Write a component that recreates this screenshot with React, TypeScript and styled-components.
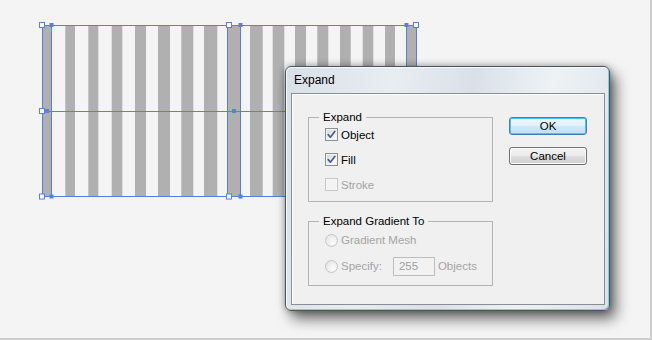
import React from 'react'
import styled, { createGlobalStyle, css } from 'styled-components'

const GlobalStyle = createGlobalStyle`
  html, body {
    margin: 0;
    padding: 0;
  }
  body {
    background: #f4f4f4;
    font-family: "Liberation Sans", Arial, sans-serif;
  }
`

const Page = styled.div`
  position: relative;
  width: 652px;
  height: 340px;
  box-sizing: border-box;
  background: #f4f4f4;
  border-right: 2px solid #cdcdcd;
  border-bottom: 2px solid #cdcdcd;
  overflow: hidden;
`

const Artwork = styled.svg`
  position: absolute;
  left: 38px;
  top: 21px;
`

const Dialog = styled.div`
  position: absolute;
  left: 285px;
  top: 66px;
  width: 325px;
  height: 245px;
  box-sizing: border-box;
  display: flex;
  flex-direction: column;
  border: 1px solid #4b5660;
  border-radius: 6px;
  background: linear-gradient(100deg, #d8e0e7 0%, #e8edf1 30%, #d9e1e8 52%, #eef2f5 74%, #dae2e9 100%);
  box-shadow:
    inset -1px -1px 0 #7ccfe6,
    inset 1px 1px 0 #f6f9fb,
    0 0 7px rgba(0, 0, 0, 0.35),
    6px 8px 14px rgba(0, 0, 0, 0.55);
`

const TitleBar = styled.div`
  height: 26px;
  flex: none;
  display: flex;
  align-items: center;
  padding-left: 8px;
  font-size: 12px;
  color: #000;
`

const Body = styled.div`
  flex: 1;
  margin: 0 4px 5px 5px;
  display: flex;
  align-items: flex-start;
  gap: 16px;
  padding: 23px 0 0 16px;
  border: 1px solid #8a8e92;
  background: #f0f0f0;
  box-shadow: inset 1px 1px 0 #ffffff;
  font-size: 11.5px;
`

const Groups = styled.div`
  display: flex;
  flex-direction: column;
  gap: 19px;
`

const GroupBox = styled.div<{ $pad: string }>`
  position: relative;
  width: 185px;
  box-sizing: border-box;
  border: 1px solid #b4b4b4;
  padding: ${p => p.$pad};
`

const Legend = styled.span`
  position: absolute;
  top: -8px;
  left: 10px;
  padding: 0 4px;
  background: #f0f0f0;
  line-height: 14px;
  color: #000;
`

const Row = styled.div<{ $h: number }>`
  display: flex;
  align-items: center;
  gap: 3px;
  height: ${p => p.$h}px;
`

const Label = styled.span<{ $disabled?: boolean }>`
  color: ${p => (p.$disabled ? '#a4a4a4' : '#000')};
  white-space: nowrap;
`

const Box = styled.span<{ $disabled?: boolean }>`
  width: 13px;
  height: 13px;
  flex: none;
  box-sizing: border-box;
  display: flex;
  align-items: center;
  justify-content: center;
  border: 1px solid ${p => (p.$disabled ? '#c6c6c6' : '#8e8f8f')};
  background: ${p => (p.$disabled
    ? '#f3f3f3'
    : 'linear-gradient(135deg, #d2d4d6 0%, #f6f6f6 70%, #ffffff 100%)')};
  box-shadow: inset 0 0 0 1px ${p => (p.$disabled ? '#f7f7f7' : '#f4f4f4')};
`

const Radio = styled.span`
  width: 13px;
  height: 13px;
  flex: none;
  box-sizing: border-box;
  border-radius: 50%;
  border: 1px solid #c4c4c4;
  background: radial-gradient(circle at 65% 70%, #fbfbfb 0%, #ececec 60%, #e0e0e0 100%);
`

const NumberField = styled.span`
  width: 42px;
  height: 19px;
  box-sizing: border-box;
  margin-left: 8px;
  padding-left: 5px;
  display: flex;
  align-items: center;
  border: 1px solid #bdbdbd;
  background: #f2f2f2;
  color: #a0a0a0;
`

const Buttons = styled.div`
  display: flex;
  flex-direction: column;
  gap: 12px;
`

const Button = styled.div<{ $default?: boolean }>`
  width: 78px;
  height: 18px;
  box-sizing: border-box;
  display: flex;
  align-items: center;
  justify-content: center;
  border-radius: 3px;
  border: 1px solid #707070;
  background: linear-gradient(to bottom, #f2f2f2 0%, #ebebeb 50%, #dddddd 51%, #cfcfcf 100%);
  box-shadow: inset 0 0 0 1px #fbfbfb;
  color: #000;
  ${p => p.$default && css`
    border-color: #3c7fb1;
    box-shadow: inset 0 0 0 1px #48c5f1;
    background: linear-gradient(to bottom, #eef7fc 0%, #e3f1fa 50%, #cfe8f7 51%, #c0e0f4 100%);
  `}
`

const BLUE = '#5580df'

const stripes: [number, number][] = [
  [42, 51.7], [65.3, 75], [88.3, 98.3], [111.7, 122.3], [135, 146], [158, 170],
  [181.3, 193.3], [204, 217.3], [227.3, 240.7], [250, 262.7], [272.7, 284.3],
  [295, 306], [317.3, 328.3], [340, 350.7], [362.7, 373.3], [385, 395], [406, 416],
]

const handles: [number, number][] = [
  [42, 25], [229, 25], [416, 25], [42, 111], [416, 111], [42, 196.5], [229, 196.5], [416, 196.5],
]

const anchors: [number, number][] = [
  [51.5, 25], [240.5, 25], [406.5, 25], [47, 111], [234, 111], [411, 111],
  [51.5, 196.5], [240.5, 196.5], [406.5, 196.5],
]

const StripeArt: React.FC = () => (
  <Artwork width={382} height={180} viewBox="38 21 382 180">
    {stripes.map(([a, b], i) => (
      <rect key={i} x={a} y={25} width={b - a} height={171.5} fill="#b0b0b0" />
    ))}
    <g stroke={BLUE} strokeWidth={1} fill="none" shapeRendering="crispEdges">
      <rect x={42.5} y={25.5} width={373.5} height={171} />
      <line x1={51.5} y1={25} x2={51.5} y2={197} />
      <line x1={227.5} y1={25} x2={227.5} y2={197} />
      <line x1={240.5} y1={25} x2={240.5} y2={197} />
      <line x1={406.5} y1={25} x2={406.5} y2={197} />
      <line x1={42} y1={111.5} x2={416} y2={111.5} />
    </g>
    {anchors.map(([x, y], i) => (
      <rect key={i} x={x - 2} y={y - 2} width={4} height={4} fill={BLUE} />
    ))}
    {handles.map(([x, y], i) => (
      <rect key={i} x={x - 2.5} y={y - 2.5} width={5} height={5} fill="#ffffff" stroke={BLUE} strokeWidth={1} />
    ))}
  </Artwork>
)

const CheckMark: React.FC = () => (
  <svg width="9" height="9" viewBox="0 0 9 9">
    <path d="M1.2 4.6 L3.4 7.2 L7.8 1.4" fill="none" stroke="#4a5f8f" strokeWidth="1.7" strokeLinecap="round" strokeLinejoin="round" />
  </svg>
)

const App: React.FC = () => (
  <>
    <GlobalStyle />
    <Page>
      <StripeArt />
      <Dialog>
        <TitleBar>Expand</TitleBar>
        <Body>
          <Groups>
            <GroupBox $pad="4px 0 4px 16px">
              <Legend>Expand</Legend>
              <Row $h={25}>
                <Box><CheckMark /></Box>
                <Label>Object</Label>
              </Row>
              <Row $h={25}>
                <Box><CheckMark /></Box>
                <Label>Fill</Label>
              </Row>
              <Row $h={25}>
                <Box $disabled />
                <Label $disabled>Stroke</Label>
              </Row>
            </GroupBox>
            <GroupBox $pad="5px 0 6px 16px">
              <Legend>Expand Gradient To</Legend>
              <Row $h={26}>
                <Radio />
                <Label $disabled>Gradient Mesh</Label>
              </Row>
              <Row $h={26}>
                <Radio />
                <Label $disabled>Specify:</Label>
                <NumberField>255</NumberField>
                <Label $disabled>Objects</Label>
              </Row>
            </GroupBox>
          </Groups>
          <Buttons>
            <Button $default>OK</Button>
            <Button>Cancel</Button>
          </Buttons>
        </Body>
      </Dialog>
    </Page>
  </>
)

export default App
